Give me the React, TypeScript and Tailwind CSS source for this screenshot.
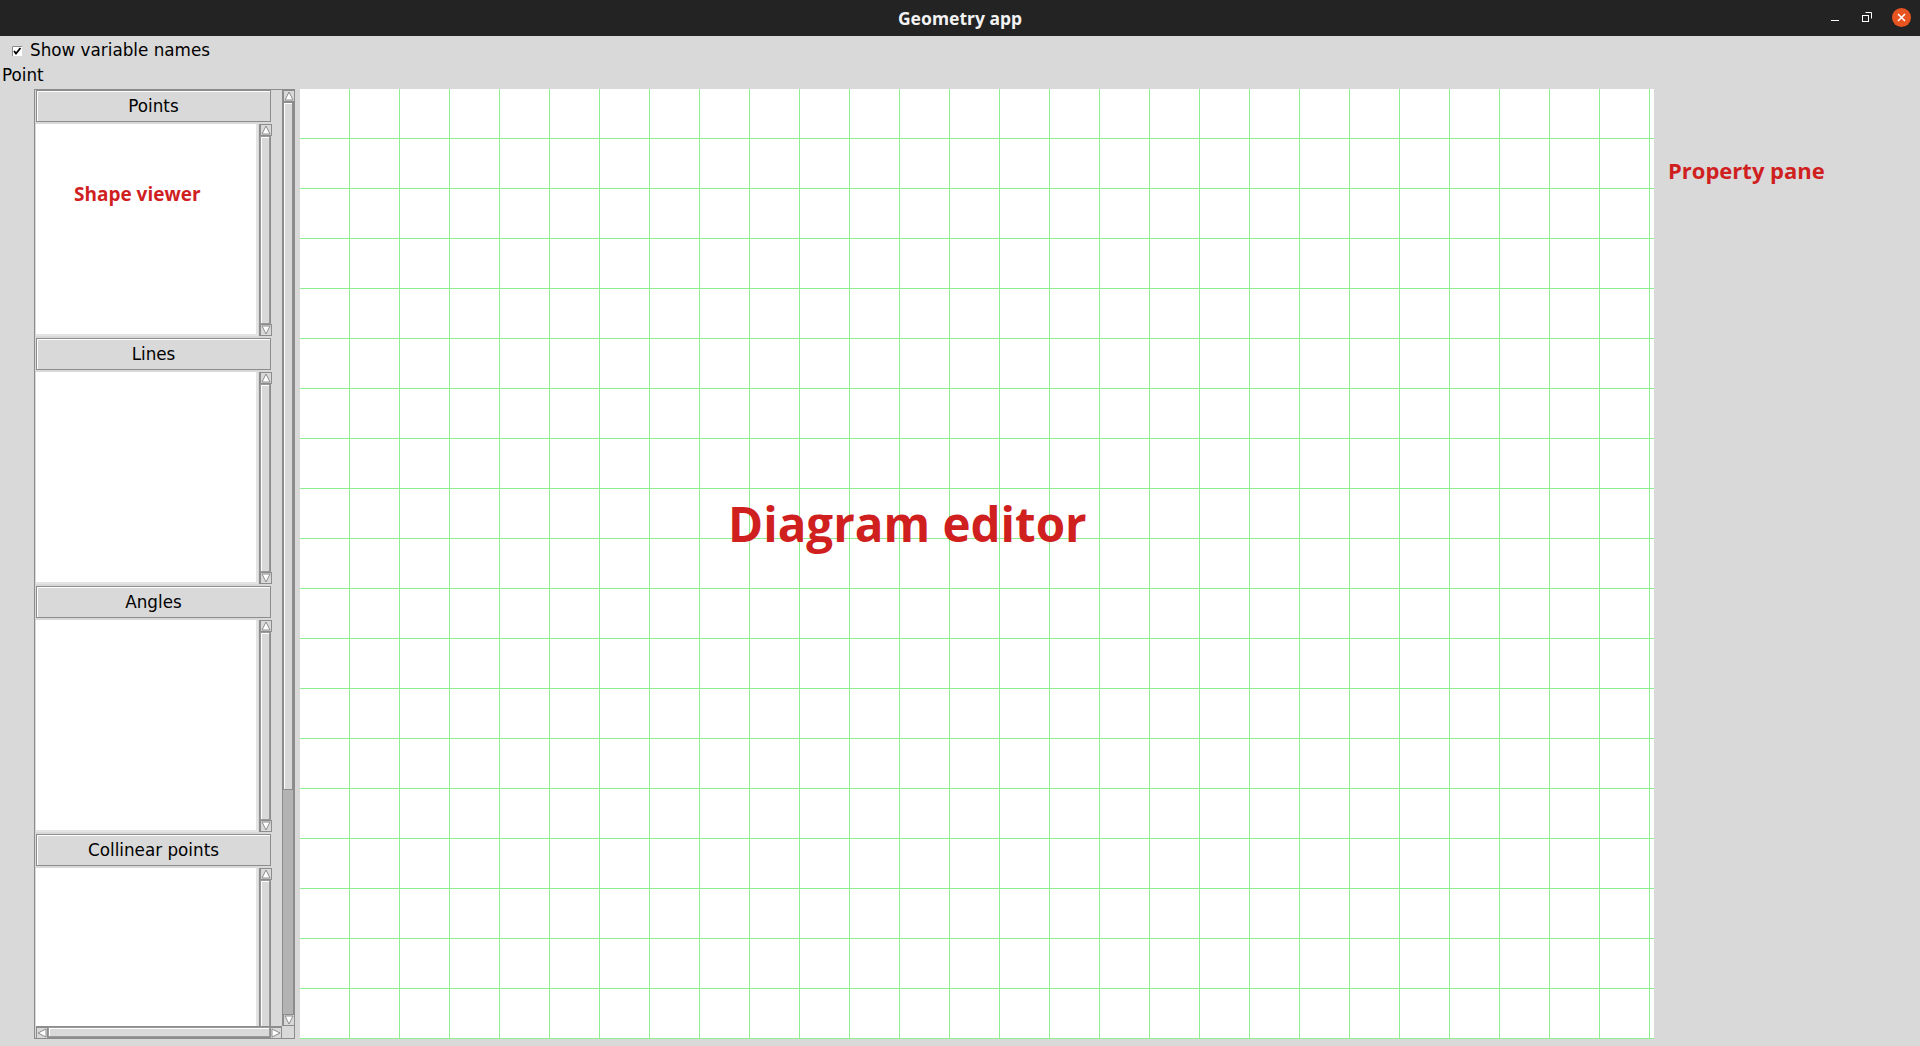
function Arrow({ dir }: { dir: "up" | "down" | "left" | "right" }) {
  const d = {
    up: "M6 2 L10 10 L2 10 Z",
    down: "M2 2 L10 2 L6 10 Z",
    left: "M2 6 L10 2 L10 10 Z",
    right: "M2 2 L10 6 L2 10 Z",
  }[dir];
  return (
    <svg width="12" height="12" viewBox="0 0 12 12" className="block shrink-0">
      <rect x="0.5" y="0.5" width="11" height="11" fill="#d9d9d9" stroke="#8c8c8c" />
      <path d={d} fill="#fff" stroke="#8c8c8c" strokeWidth="1" />
    </svg>
  );
}

function VScroll() {
  return (
    <div className="w-[12px] h-full flex flex-col bg-[#d9d9d9] border-x border-[#8c8c8c]">
      <Arrow dir="up" />
      <div className="flex-1 border border-[#9a9a9a] shadow-[inset_1px_1px_0_#fff]" />
      <Arrow dir="down" />
    </div>
  );
}

function Section({ title, children }: { title: string; children?: React.ReactNode }) {
  return (
    <div className="w-[235px] flex flex-col gap-[2px] shrink-0">
      <div className="h-[32px] pt-[2px] bg-[#d9d9d9] border border-[#8c8c8c] shadow-[inset_1px_1px_0_#fff] flex items-center justify-center text-[16.8px] text-black">
        {title}
      </div>
      <div className="h-[212px] flex gap-[1px]">
        <div className="relative flex-1 bg-white border-r-2 border-b-2 border-[#e4e4e4]">{children}</div>
        <VScroll />
      </div>
    </div>
  );
}

export default function App() {
  return (
    <div className="w-[1920px] h-[1046px] bg-[#d9d9d9] overflow-hidden font-['DejaVu_Sans',sans-serif] text-black">
      {/* title bar */}
      <div className="relative h-[36px] bg-[#232323] flex items-center justify-center">
        <span className="font-['Noto_Sans',sans-serif] font-bold text-[17.5px] text-[#f2f2f2]">Geometry app</span>
        <div className="absolute right-0 top-0 h-[36px] flex items-center">
          <div className="w-[8px] h-[1px] bg-white mr-[23px] mt-[4px]" />
          <svg width="10" height="10" viewBox="0 0 10 10" className="mr-[20px] -mt-[3px]">
            <path d="M3.5 0.5 H9.5 V6.5" fill="none" stroke="#fff" />
            <rect x="0.5" y="3.5" width="6" height="6" fill="none" stroke="#fff" />
          </svg>
          <div className="w-[19px] h-[19px] rounded-full bg-[#e8541f] flex items-center justify-center mr-[9px] -mt-[2px]">
            <svg width="9" height="9" viewBox="0 0 9 9">
              <path d="M1 1 L8 8 M8 1 L1 8" stroke="#fff" strokeWidth="1.6" />
            </svg>
          </div>
        </div>
      </div>

      {/* checkbox row */}
      <div className="h-[28px] pt-[2px] flex items-center pl-[12px] gap-[8px] text-[16.8px]">
        <svg width="10" height="10" viewBox="0 0 10 10" className="block">
          <rect x="0" y="0" width="10" height="10" fill="#fff" />
          <path d="M0.5 10 V0.5 H10" fill="none" stroke="#8c8c8c" />
          <path d="M2 5 L4 7.5 L8.5 2" fill="none" stroke="#000" strokeWidth="1.8" />
        </svg>
        <span>Show variable names</span>
      </div>
      <div className="h-[24px] flex items-center pl-[2px] text-[16.8px]">Point</div>

      {/* main row */}
      <div className="mt-[1px] flex">
        {/* shape viewer */}
        <div className="ml-[34px] w-[261px] h-[950px] border border-[#8c8c8c] grid grid-cols-[1fr_12px] grid-rows-[1fr_12px]">
          <div className="overflow-hidden pl-[1px] flex flex-col gap-[2px]">
            <Section title="Points">
              <span className="absolute left-[38px] top-[56px] font-['Open_Sans',sans-serif] font-bold text-[19px] text-[#d01f1f]">
                Shape viewer
              </span>
            </Section>
            <Section title="Lines" />
            <Section title="Angles" />
            <Section title="Collinear points" />
          </div>
          <div className="flex flex-col bg-[#b3b3b3] border-x border-[#8c8c8c]">
            <Arrow dir="up" />
            <div className="h-[688px] bg-[#d9d9d9] border border-[#8c8c8c] shadow-[inset_1px_1px_0_#fff]" />
            <div className="flex-1" />
            <Arrow dir="down" />
          </div>
          <div className="ml-[1px] flex bg-[#d9d9d9] border-y border-[#8c8c8c]">
            <Arrow dir="left" />
            <div className="flex-1 border border-[#9a9a9a] shadow-[inset_1px_1px_0_#fff]" />
            <Arrow dir="right" />
          </div>
          <div className="bg-[#d9d9d9]" />
        </div>

        {/* diagram editor */}
        <div className="relative ml-[5px] w-[1354px] h-[950px] bg-white bg-[linear-gradient(to_right,#90ee90_1px,transparent_1px),linear-gradient(to_bottom,#90ee90_1px,transparent_1px)] [background-size:50px_50px] [background-position:49px_49px]">
          <span className="absolute left-[428px] top-[405px] font-['Open_Sans',sans-serif] font-bold text-[47.5px] text-[#d01f1f] leading-tight">
            Diagram editor
          </span>
        </div>

        {/* property pane */}
        <div className="relative flex-1">
          <span className="absolute left-[14px] top-[65px] font-['Open_Sans',sans-serif] font-bold text-[22px] text-[#d01f1f]">
            Property pane
          </span>
        </div>
      </div>
    </div>
  );
}
